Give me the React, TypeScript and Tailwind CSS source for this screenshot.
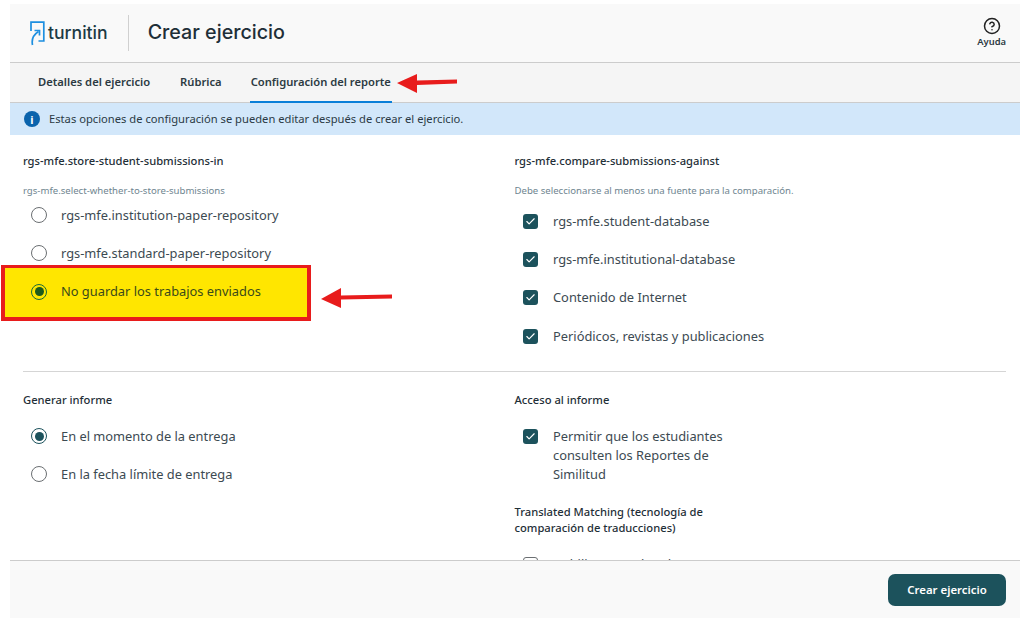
import { Check, CircleHelp } from "lucide-react";

function Radio({ label, checked, marked }: { label: string; checked?: boolean; marked?: boolean }) {
  return (
    <div className="flex h-[38.3px] items-center gap-[14px] pl-[8px]">
      <span
        className={`flex h-4 w-4 shrink-0 items-center justify-center rounded-full border ${
          marked ? "border-[#1b6b3a]" : checked ? "border-[#1c525c]" : "border-[#6b6f72]"
        }`}
      >
        {checked && (
          <span className={`h-[9px] w-[9px] rounded-full ${marked ? "bg-[#1c5a1c]" : "bg-[#1c525c]"}`} />
        )}
      </span>
      <span className={`text-[12.85px] ${marked ? "text-[#3a4a1a]" : "text-[#3c4a52]"}`}>{label}</span>
    </div>
  );
}

function CheckRow({ label }: { label: string }) {
  return (
    <div className="flex min-h-[38.2px] items-start gap-[15px] pl-[8.5px] pt-[11px]">
      <span className="flex h-[15px] w-[15px] shrink-0 items-center justify-center rounded-[3px] bg-[#1c525c]">
        <Check size={11} strokeWidth={2.5} className="text-white" />
      </span>
      <span className="-mt-[2px] text-[12.85px] leading-[19px] text-[#3c4a52]">{label}</span>
    </div>
  );
}

export default function App() {
  return (
    <div
      className="relative flex h-[618px] w-[1020px] flex-col overflow-hidden bg-white pl-[10px] pt-[4px]"
      style={{ fontFamily: '"Noto Sans", sans-serif' }}
    >
      {/* resaltado amarillo */}
      <div className="absolute left-[1px] top-[265px] h-[56px] w-[310px] border-4 border-t-[3px] border-[#e81c1c] bg-[#ffe600]" />

      <header className="relative flex h-[59px] shrink-0 items-center border-b border-[#cccccc] bg-[#f9f9f9] pl-[20px] pr-[14px]">
        <svg width="15" height="25" viewBox="0 0 15 25" fill="none" className="shrink-0">
          <path d="M1 10V1.2H13.8V20H8.5" stroke="#1d8fe0" strokeWidth="1.7" />
          <path d="M2.5 24C1.5 19 3 14 8.5 10.5" stroke="#1d8fe0" strokeWidth="1.7" />
          <path d="M4.5 9.5H9.5V14.5" stroke="#1d8fe0" strokeWidth="1.7" />
        </svg>
        <span className="ml-[3px] text-[17.6px] font-medium text-[#1c3a44]" style={{ fontFamily: "Inter, sans-serif" }}>
          turnitin
        </span>
        <div className="ml-[20px] h-[36px] w-px bg-[#d0d0d0]" />
        <h1 className="ml-[19px] text-[19.7px] font-medium text-[#1f2f38]" style={{ fontFamily: "Inter, sans-serif" }}>
          Crear ejercicio
        </h1>
        <div className="ml-auto flex flex-col items-center">
          <CircleHelp size={18} strokeWidth={2} className="text-[#222]" />
          <span className="text-[9.4px] font-semibold leading-[14px] text-[#2c3a42]">Ayuda</span>
        </div>
      </header>

      <nav className="flex h-[40px] shrink-0 gap-[30px] border-b border-[#cccccc] bg-[#f5f5f5] pl-[28px] text-[11.2px] font-semibold text-[#2c3a42]">
        <span className="flex items-center">Detalles del ejercicio</span>
        <span className="flex items-center">Rúbrica</span>
        <span className="-mb-px -ml-[2px] flex items-center border-b-2 border-[#0a7fd8] px-px">Configuración del reporte</span>
      </nav>

      <div className="flex h-[32px] shrink-0 items-center gap-[9px] bg-[#d2e7fa] pl-[14px] text-[11.2px] text-[#2b3a45]">
        <span className="flex h-4 w-4 items-center justify-center rounded-full bg-[#0a63ac] text-[11px] font-bold leading-none text-white">
          i
        </span>
        Estas opciones de configuración se pueden editar después de crear el ejercicio.
      </div>

      <main className="relative min-h-0 flex-1 overflow-hidden pl-[13px] pr-[14px]">
        <div className="grid grid-cols-[491.5px_1fr] pt-[17px]">
          <section className="h-[219px]">
            <h2 className="text-[11.2px] font-medium leading-[18px] text-[#1f2f38]">rgs-mfe.store-student-submissions-in</h2>
            <p className="mt-[14px] text-[9.6px] leading-[14px] text-[#6f8590]">rgs-mfe.select-whether-to-store-submissions</p>
            <div className="-mt-[2px]">
              <Radio label="rgs-mfe.institution-paper-repository" />
              <Radio label="rgs-mfe.standard-paper-repository" />
              <Radio label="No guardar los trabajos enviados" checked marked />
            </div>
          </section>
          <section className="h-[219px]">
            <h2 className="text-[11.2px] font-medium leading-[18px] text-[#1f2f38]">rgs-mfe.compare-submissions-against</h2>
            <p className="mt-[14px] text-[9.6px] leading-[14px] text-[#6f8590]">Debe seleccionarse al menos una fuente para la comparación.</p>
            <div className="mt-[5px]">
              <CheckRow label="rgs-mfe.student-database" />
              <CheckRow label="rgs-mfe.institutional-database" />
              <CheckRow label="Contenido de Internet" />
              <CheckRow label="Periódicos, revistas y publicaciones" />
            </div>
          </section>
        </div>

        <div className="border-t border-[#d5d5d5]" />

        <div className="grid grid-cols-[491.5px_1fr] pt-[19px]">
          <section>
            <h2 className="text-[11.2px] font-medium leading-[18px] text-[#1f2f38]">Generar informe</h2>
            <div className="mt-[8px]">
              <Radio label="En el momento de la entrega" checked />
              <Radio label="En la fecha límite de entrega" />
            </div>
          </section>
          <section className="w-[240px]">
            <h2 className="text-[11.2px] font-medium leading-[18px] text-[#1f2f38]">Acceso al informe</h2>
            <div className="mt-[9px]">
              <CheckRow label="Permitir que los estudiantes consulten los Reportes de Similitud" />
            </div>
            <h2 className="mt-[20px] text-[11.2px] font-medium leading-[16px] text-[#1f2f38]">
              Translated Matching (tecnología de comparación de traducciones)
            </h2>
            <div className="mt-[21px] flex items-start gap-[15px] pl-[8.5px]">
              <span className="h-[15px] w-[15px] shrink-0 rounded-[3px] border border-[#6b6f72]" />
              <span className="-mt-[2px] text-[12.85px] leading-[19px] text-[#3c4a52]">Habilitar Translated M</span>
            </div>
          </section>
        </div>
      </main>

      <footer className="relative flex h-[58px] shrink-0 items-center justify-end border-t border-[#cccccc] bg-[#f9f9f9] pr-[14px]">
        <button className="h-[32px] w-[118px] rounded-[7px] bg-[#1c525c] text-[11.4px] font-semibold text-white">
          Crear ejercicio
        </button>
      </footer>

      {/* flechas rojas */}
      <svg className="absolute left-[397px] top-[73px]" width="61" height="21" viewBox="0 0 61 21">
        <path d="M0 10L20 1L20 7.5L60 6.5L60 10.5L20 12L20 20Z" fill="#e81c1c" />
      </svg>
      <svg className="absolute left-[321px] top-[287px]" width="72" height="22" viewBox="0 0 72 22">
        <path d="M0 12L20 1L20 8.5L71 7.5L71 11.5L20 12.5L20 21Z" fill="#e81c1c" />
      </svg>
    </div>
  );
}
